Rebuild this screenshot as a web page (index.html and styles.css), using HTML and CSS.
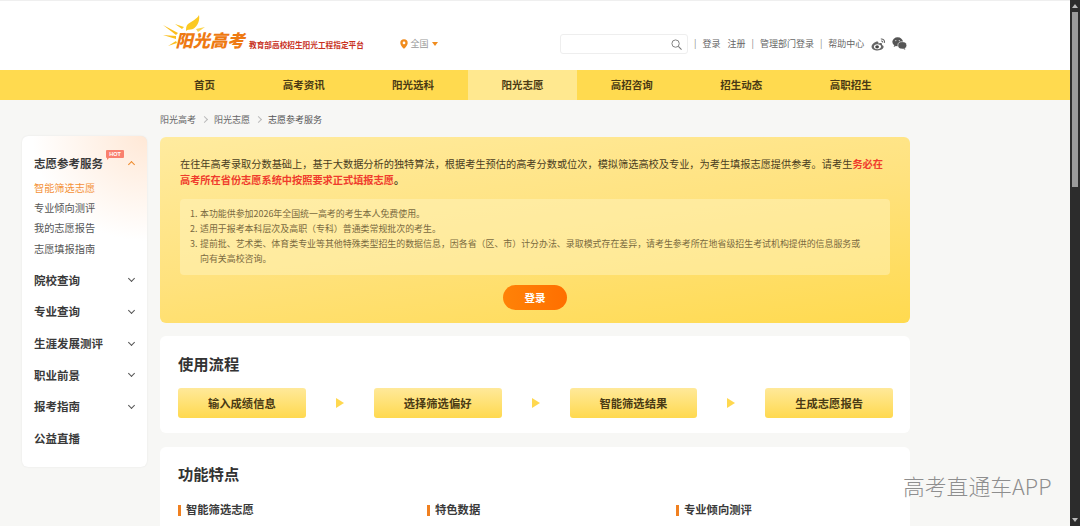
FILE: index.html
```html
<!DOCTYPE html>
<html lang="zh">
<head>
<meta charset="utf-8">
<title>阳光高考</title>
<link rel="stylesheet" href="styles.css">
</head>
<body>
<div class="window">
  <div class="page">
    <header class="header">
      <div class="logo">
        <svg class="sun" viewBox="0 0 52 34" width="52" height="34">
          <path d="M26 9 C30 6 35 4 37 0 C38 5 36 11 31 14 C28 15 26 14 24 16 C24 13 24 11 26 9Z" fill="#fbc923"/>
          <path d="M13 9 L22 12 L20 14Z" fill="#fbc923"/>
          <path d="M1 10 L16 18 L14 20Z" fill="#fbbf1c"/>
          <path d="M1 20 L14 21 L14 24Z" fill="#fbbf1c"/>
          <path d="M6 31 L14 26 L15 28Z" fill="#fbbf1c"/>
          <path d="M34 14 L43 12 L36 17Z" fill="#fbd54f"/>
        </svg>
        <span class="logo-name">阳光高考</span>
        <span class="logo-sub">教育部高校招生阳光工程指定平台</span>
      </div>
      <div class="region">
        <svg viewBox="0 0 10 12" width="8" height="10"><path fill="#f08c1e" fill-rule="evenodd" d="M5 0a4.6 4.6 0 0 1 4.6 4.6C9.600 7.800 5 12 5 12S.4 7.800.4 4.600A4.600 4.600 0 0 1 5 0zm0 3a1.700 1.700 0 1 0 0 3.400A1.700 1.700 0 0 0 5 3z"/></svg>
        <span>全国</span><i class="caret"></i>
      </div>
      <div class="tools">
        <div class="search">
          <svg viewBox="0 0 12 12" width="11" height="11"><circle cx="5" cy="5" r="4" fill="none" stroke="#777" stroke-width="1"/><path d="M8 8l3.500 3.500" stroke="#777" stroke-width="1.100"/></svg>
        </div>
        <span class="sep">|</span><a class="first">登录</a><a>注册</a>
        <span class="sep">|</span><a>管理部门登录</a>
        <span class="sep">|</span><a>帮助中心</a>
        <svg class="weibo" viewBox="0 0 16 14" width="15" height="13"><path fill="#666" fill-rule="evenodd" d="M6.500 3.500C3.500 4.500.5 7 .5 9.500c0 2.500 3 4 6.500 4 4 0 6.500-2.200 6.500-4 0-1.500-1.300-1.800-1.800-2 .4-1 .3-2-1.400-2-1 0-2 .5-2.300.5.200-1.500-.5-3-2.500-2.500zM6.800 6.600c2.300 0 4 1 4 2.500s-1.800 3-4 3-3.800-1.200-3.800-2.700 1.600-2.800 3.800-2.800z"/><ellipse cx="6.500" cy="9.500" rx="2" ry="1.700" fill="#444"/><path fill="none" stroke="#666" stroke-width="1.100" d="M10.500 1.200c2.500-.4 4.500 1.500 4 4M10.800 3.200c1.200-.2 2 .7 1.800 1.800"/></svg>
        <svg class="wechat" viewBox="0 0 16 14" width="15" height="13"><ellipse cx="6" cy="5.200" rx="5.700" ry="4.800" fill="#555"/><path d="M2.500 8.500l-.8 2.300 3-1.500z" fill="#555"/><circle cx="4" cy="3.800" r=".7" fill="#ddd"/><circle cx="7.800" cy="3.800" r=".7" fill="#ddd"/><ellipse cx="11" cy="9" rx="4.800" ry="4" fill="#555" stroke="#fff" stroke-width=".7"/><path d="M13.500 12l1 1.600-3-1z" fill="#555"/></svg>
      </div>
    </header>
    <nav class="nav">
      <a>首页</a><a>高考资讯</a><a>阳光选科</a><a class="active">阳光志愿</a><a>高招咨询</a><a>招生动态</a><a>高职招生</a>
    </nav>
    <div class="crumbs">
      <span>阳光高考</span><i></i><span>阳光志愿</span><i></i><span class="now">志愿参考服务</span>
    </div>
    <div class="body">
      <aside class="side">
        <div class="group">
          <div class="side-title"><span class="tit-text">志愿参考服务<em class="hot">HOT</em></span><i class="chev up"></i></div>
          <ul>
            <li class="cur">智能筛选志愿</li>
            <li>专业倾向测评</li>
            <li>我的志愿报告</li>
            <li>志愿填报指南</li>
          </ul>
        </div>
        <div class="side-title"><span>院校查询</span><i class="chev"></i></div>
        <div class="side-title"><span>专业查询</span><i class="chev"></i></div>
        <div class="side-title"><span>生涯发展测评</span><i class="chev"></i></div>
        <div class="side-title"><span>职业前景</span><i class="chev"></i></div>
        <div class="side-title"><span>报考指南</span><i class="chev"></i></div>
        <div class="side-title"><span>公益直播</span></div>
      </aside>
      <main class="main">
        <section class="hero">
          <p class="lead">在往年高考录取分数基础上，基于大数据分析的独特算法，根据考生预估的高考分数或位次，模拟筛选高校及专业，为考生填报志愿提供参考。请考生<b class="red">务必在高考所在省份志愿系统中按照要求正式填报志愿</b><b>。</b></p>
          <ol class="notes">
            <li>本功能供参加2026年全国统一高考的考生本人免费使用。</li>
            <li>适用于报考本科层次及高职（专科）普通类常规批次的考生。</li>
            <li>提前批、艺术类、体育类专业等其他特殊类型招生的数据信息，因各省（区、市）计分办法、录取模式存在差异，请考生参考所在地省级招生考试机构提供的信息服务或向有关高校咨询。</li>
          </ol>
          <div class="login-row"><a class="login">登录</a></div>
        </section>
        <section class="card flow">
          <h2>使用流程</h2>
          <div class="steps">
            <div class="step">输入成绩信息</div><i class="arrow"></i>
            <div class="step">选择筛选偏好</div><i class="arrow"></i>
            <div class="step">智能筛选结果</div><i class="arrow"></i>
            <div class="step">生成志愿报告</div>
          </div>
        </section>
        <section class="card features">
          <h2>功能特点</h2>
          <div class="feat-row">
            <h3>智能筛选志愿</h3>
            <h3>特色数据</h3>
            <h3>专业倾向测评</h3>
          </div>
        </section>
      </main>
    </div>
  </div>
  <div class="scrollbar">
    <i class="sb-up"></i>
    <div class="sb-thumb"></div>
    <i class="sb-down"></i>
  </div>
  <div class="watermark">高考直通车APP</div>
</div>
</body>
</html>
```
FILE: styles.css
```css
* { box-sizing: border-box; }
html, body { margin: 0; height: 100%; overflow: hidden; }
body { font-family: "Noto Sans CJK SC", "Liberation Sans", sans-serif; color: #333; background: #f7f7f5; }
ul, ol { margin: 0; padding: 0; list-style: none; }
a { color: inherit; text-decoration: none; }
i, em { font-style: normal; }

.window { width: 1080px; height: 526px; display: flex; overflow: hidden; position: relative; }
.page { width: 1070px; flex: none; height: 526px; overflow: hidden; }

.scrollbar { width: 10px; flex: none; background: #2c2c2c; display: flex; flex-direction: column; align-items: center; padding: 4px 0; }
.sb-up { width: 0; height: 0; border: 3px solid transparent; border-bottom: 4px solid #bbb; border-top: 0; }
.sb-thumb { width: 6px; height: 175px; margin-top: 4px; background: #9a9a9a; }
.sb-down { width: 0; height: 0; border: 3px solid transparent; border-top: 4px solid #bbb; border-bottom: 0; margin-top: auto; }

.header { height: 70px; background: #fff; display: flex; align-items: flex-start; padding-left: 160px; border-top: 1px solid #efefef; }
.logo { position: relative; width: 205px; height: 50px; margin-top: 14px; flex: none; }
.sun { position: absolute; left: 2px; top: 0; }
.logo-name { position: absolute; left: 15.500px; top: 12px; font: italic 900 17.300px/26px "Noto Sans CJK SC", sans-serif; color: #ee7a12; white-space: nowrap; }
.logo-sub { position: absolute; left: 89px; top: 23px; font: 700 7.670px/14px "Noto Sans CJK SC", sans-serif; color: #c8321e; white-space: nowrap; }
.region { display: flex; align-items: center; gap: 3px; margin: 36px 0 0 34.500px; font-size: 9px; line-height: 14px; color: #999; width: 160.500px; flex: none; }
.caret { width: 0; height: 0; border: 3.500px solid transparent; border-top: 4px solid #f08c1e; border-bottom: 0; }
.tools { display: flex; align-items: center; margin-top: 33px; font-size: 9px; line-height: 20px; color: #666; }
.search { width: 128px; height: 20px; background: #fff; border: 1px solid #eee; border-radius: 3px; display: flex; align-items: center; justify-content: flex-end; padding-right: 5px; }
.sep { margin: 0 6px; color: #888; }
.tools .first { margin-right: 7px; }
.weibo { margin-left: 7px; }
.wechat { margin-left: 6px; margin-top: -2px; }

.nav { height: 30px; background: #ffda4f; display: flex; padding-left: 160px; }
.nav a { width: 109.400px; flex: none; text-align: center; font-size: 10.500px; font-weight: 700; line-height: 30px; color: #4a3a14; }
.nav a:first-child { width: 89px; }
.nav a.active { background: #ffe88f; }

.crumbs { height: 38px; padding-left: 160px; display: flex; align-items: center; font-size: 9px; color: #666; gap: 5px; }
.crumbs i { width: 5px; height: 5px; border-top: 1px solid #bbb; border-right: 1px solid #bbb; transform: rotate(45deg); margin: 0 2px 0 1px; }
.crumbs .now { color: #555; }

.body { display: flex; align-items: flex-start; padding-left: 22px; }
.side { width: 125px; height: 331px; margin-top: -2px; background: radial-gradient(ellipse 115px 105px at 100% 0, #ffe8d6 0, #fff 100%) #fff; border-radius: 6px; padding: 11px 13px 0 12px; flex: none; box-shadow: 0 0 2px rgba(0,0,0,.08); }
.side-title { display: flex; justify-content: space-between; align-items: center; height: 31.700px; font-size: 11.500px; font-weight: 700; color: #3a3a3a; }
.tit-text { position: relative; }
.hot { position: absolute; left: 72px; top: -5px; width: 18px; height: 8px; background: #f9806e; color: #fff; font: 700 5.500px/8px "Liberation Sans", sans-serif; text-align: center; border-radius: 1px; }
.hot::after { content: ""; position: absolute; left: 1px; bottom: -2px; border-top: 2px solid #f9806e; border-right: 2px solid transparent; }
.chev { width: 5px; height: 5px; border-right: 1px solid #555; border-bottom: 1px solid #555; transform: rotate(45deg); margin: -2px 0 0 0; }
.chev.up { transform: rotate(225deg); border-color: #ee8a2c; margin-top: 3px; }
.group ul { margin: -1px 0 5px; }
.group li { height: 20.300px; line-height: 20.300px; font-size: 10.200px; color: #555; }
.group li.cur { color: #f4923a; }

.main { width: 750px; margin: 0 0 0 13px; flex: none; }
.hero { height: 186px; border-radius: 6px; background: linear-gradient(172deg, #ffeb9f 0%, #ffe27e 50%, #ffda4f 100%); padding: 19px 20px 0; margin-top: -1px; }
.lead { margin: 0; font-size: 10.200px; line-height: 16px; color: #4a3d1e; }
.lead .red { color: #ef3b2c; }
.lead b { font-weight: 700; }
.notes { margin-top: 10.500px; height: 76px; background: rgba(255,244,190,.5); border-radius: 4px; padding: 7px 20px 0 20px; counter-reset: n; font-size: 8.940px; line-height: 15.300px; color: #7a6a40; }
.notes li { position: relative; counter-increment: n; width: 664px; }
.notes li::before { content: counter(n) "."; position: absolute; left: -10px; }
.login-row { display: flex; justify-content: center; margin-top: 10.500px; }
.login { width: 64px; height: 25px; background: linear-gradient(90deg, #ff8207, #ff6f00); color: #fff; border-radius: 13px; text-align: center; font-size: 10.500px; font-weight: 700; line-height: 25px; }

.card { background: #fff; border-radius: 6px; padding: 15.500px 18px 0; }
.flow { height: 97px; margin-top: 13px; }
.card h2 { margin: 0; font-size: 15.300px; font-weight: 700; line-height: 22px; color: #333; }
.steps { display: flex; align-items: center; margin-top: 14.500px; }
.step { width: 127.750px; height: 30px; border-radius: 3px; background: linear-gradient(180deg, #ffe99a, #ffd94f); text-align: center; line-height: 30px; font-size: 11.300px; font-weight: 700; color: #4a3a14; flex: none; }
.arrow { width: 0; height: 0; flex: none; border-left: 8px solid #ffd84f; border-top: 5.500px solid transparent; border-bottom: 5.500px solid transparent; margin: 0 30px; }
.features { height: 90px; margin-top: 13.500px; }
.feat-row { display: flex; margin-top: 17.500px; }
.feat-row h3 { width: 249px; flex: none; margin: 0; font-size: 11.300px; line-height: 14px; font-weight: 700; color: #3a3a3a; padding-left: 8px; position: relative; }
.feat-row h3::before { content: ""; position: absolute; left: 0; top: 3px; width: 3px; height: 11px; background: #f08020; }

.watermark { position: absolute; left: 903px; top: 473px; font-family: "Noto Sans CJK SC", sans-serif; font-weight: 300; font-size: 21.800px; line-height: 26px; color: #8e8e8e; white-space: nowrap; text-shadow: 0 0 1px #fff; }
```
